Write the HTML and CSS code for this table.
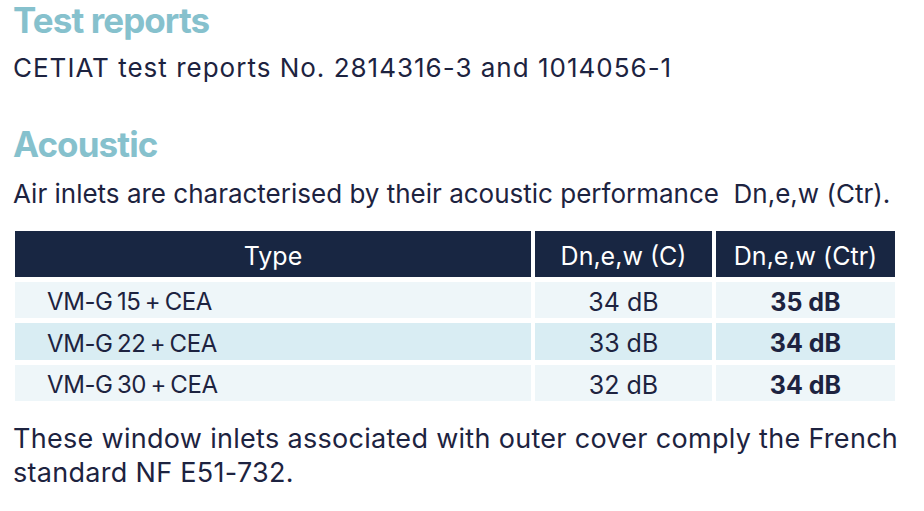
FILE: index.html
```html
<!DOCTYPE html>
<html lang="en">
<head>
<meta charset="utf-8">
<title>Test reports</title>
<link rel="stylesheet" href="styles.css">
</head>
<body>
<main class="page">
  <h2 class="title">Test reports</h2>
  <p class="text reports">CETIAT test reports No. 2814316-3 and 1014056-1</p>
  <h2 class="title acoustic">Acoustic</h2>
  <p class="text intro">Air inlets are characterised by their acoustic performance &nbsp;Dn,e,w (Ctr).</p>
  <div class="grid" role="table">
    <div class="cell head type">Type</div>
    <div class="cell head">Dn,e,w (C)</div>
    <div class="cell head">Dn,e,w (Ctr)</div>

    <div class="cell odd type">VM-G 15 + CEA</div>
    <div class="cell odd">34 dB</div>
    <div class="cell odd strong">35 dB</div>

    <div class="cell even type">VM-G 22 + CEA</div>
    <div class="cell even">33 dB</div>
    <div class="cell even strong">34 dB</div>

    <div class="cell odd type">VM-G 30 + CEA</div>
    <div class="cell odd">32 dB</div>
    <div class="cell odd strong">34 dB</div>
  </div>
  <p class="text note">These window inlets associated with outer cover comply the French standard NF E51-732.</p>
</main>
</body>
</html>
```
FILE: styles.css
```css
html, body {
  margin: 0;
  padding: 0;
  background: #ffffff;
}
body {
  font-family: Inter, "Noto Sans", sans-serif;
  color: #1d2340;
}
.page {
  padding: 0 13px;
}
.title {
  margin: 0;
  font-size: 35px;
  line-height: 40px;
  font-weight: 700;
  color: #86c1cd;
  letter-spacing: -0.9px;
}
.text {
  margin: 0;
  font-size: 26px;
  line-height: 34px;
  font-weight: 400;
}
.reports {
  margin-top: 11px;
  letter-spacing: 1px;
}
.acoustic {
  margin-top: 39px;
}
.intro {
  margin-top: 13px;
}
.grid {
  display: grid;
  grid-template-columns: 516px 177px 179px;
  grid-template-rows: 46px 36px 37px 36px;
  gap: 5px 4px;
  margin: 20px 0 0 2px;
  width: 880px;
}
.cell {
  display: flex;
  align-items: center;
  justify-content: center;
  font-size: 25px;
  padding-top: 3px;
  box-sizing: border-box;
}
.cell.type {
  justify-content: flex-start;
  padding-left: 32px;
  font-size: 24px;
  word-spacing: -2px;
  letter-spacing: -0.4px;
}
.head {
  background: #182642;
  color: #ffffff;
  padding-top: 4px;
}
.head.type {
  justify-content: center;
  padding-left: 0;
  font-size: 25px;
  word-spacing: 0;
  letter-spacing: 0;
}
.odd {
  background: #eef6f9;
}
.even {
  background: #d9edf3;
}
.strong {
  font-weight: 700;
}
.note {
  margin-top: 21px;
  font-size: 27px;
  letter-spacing: 0.3px;
}
```
